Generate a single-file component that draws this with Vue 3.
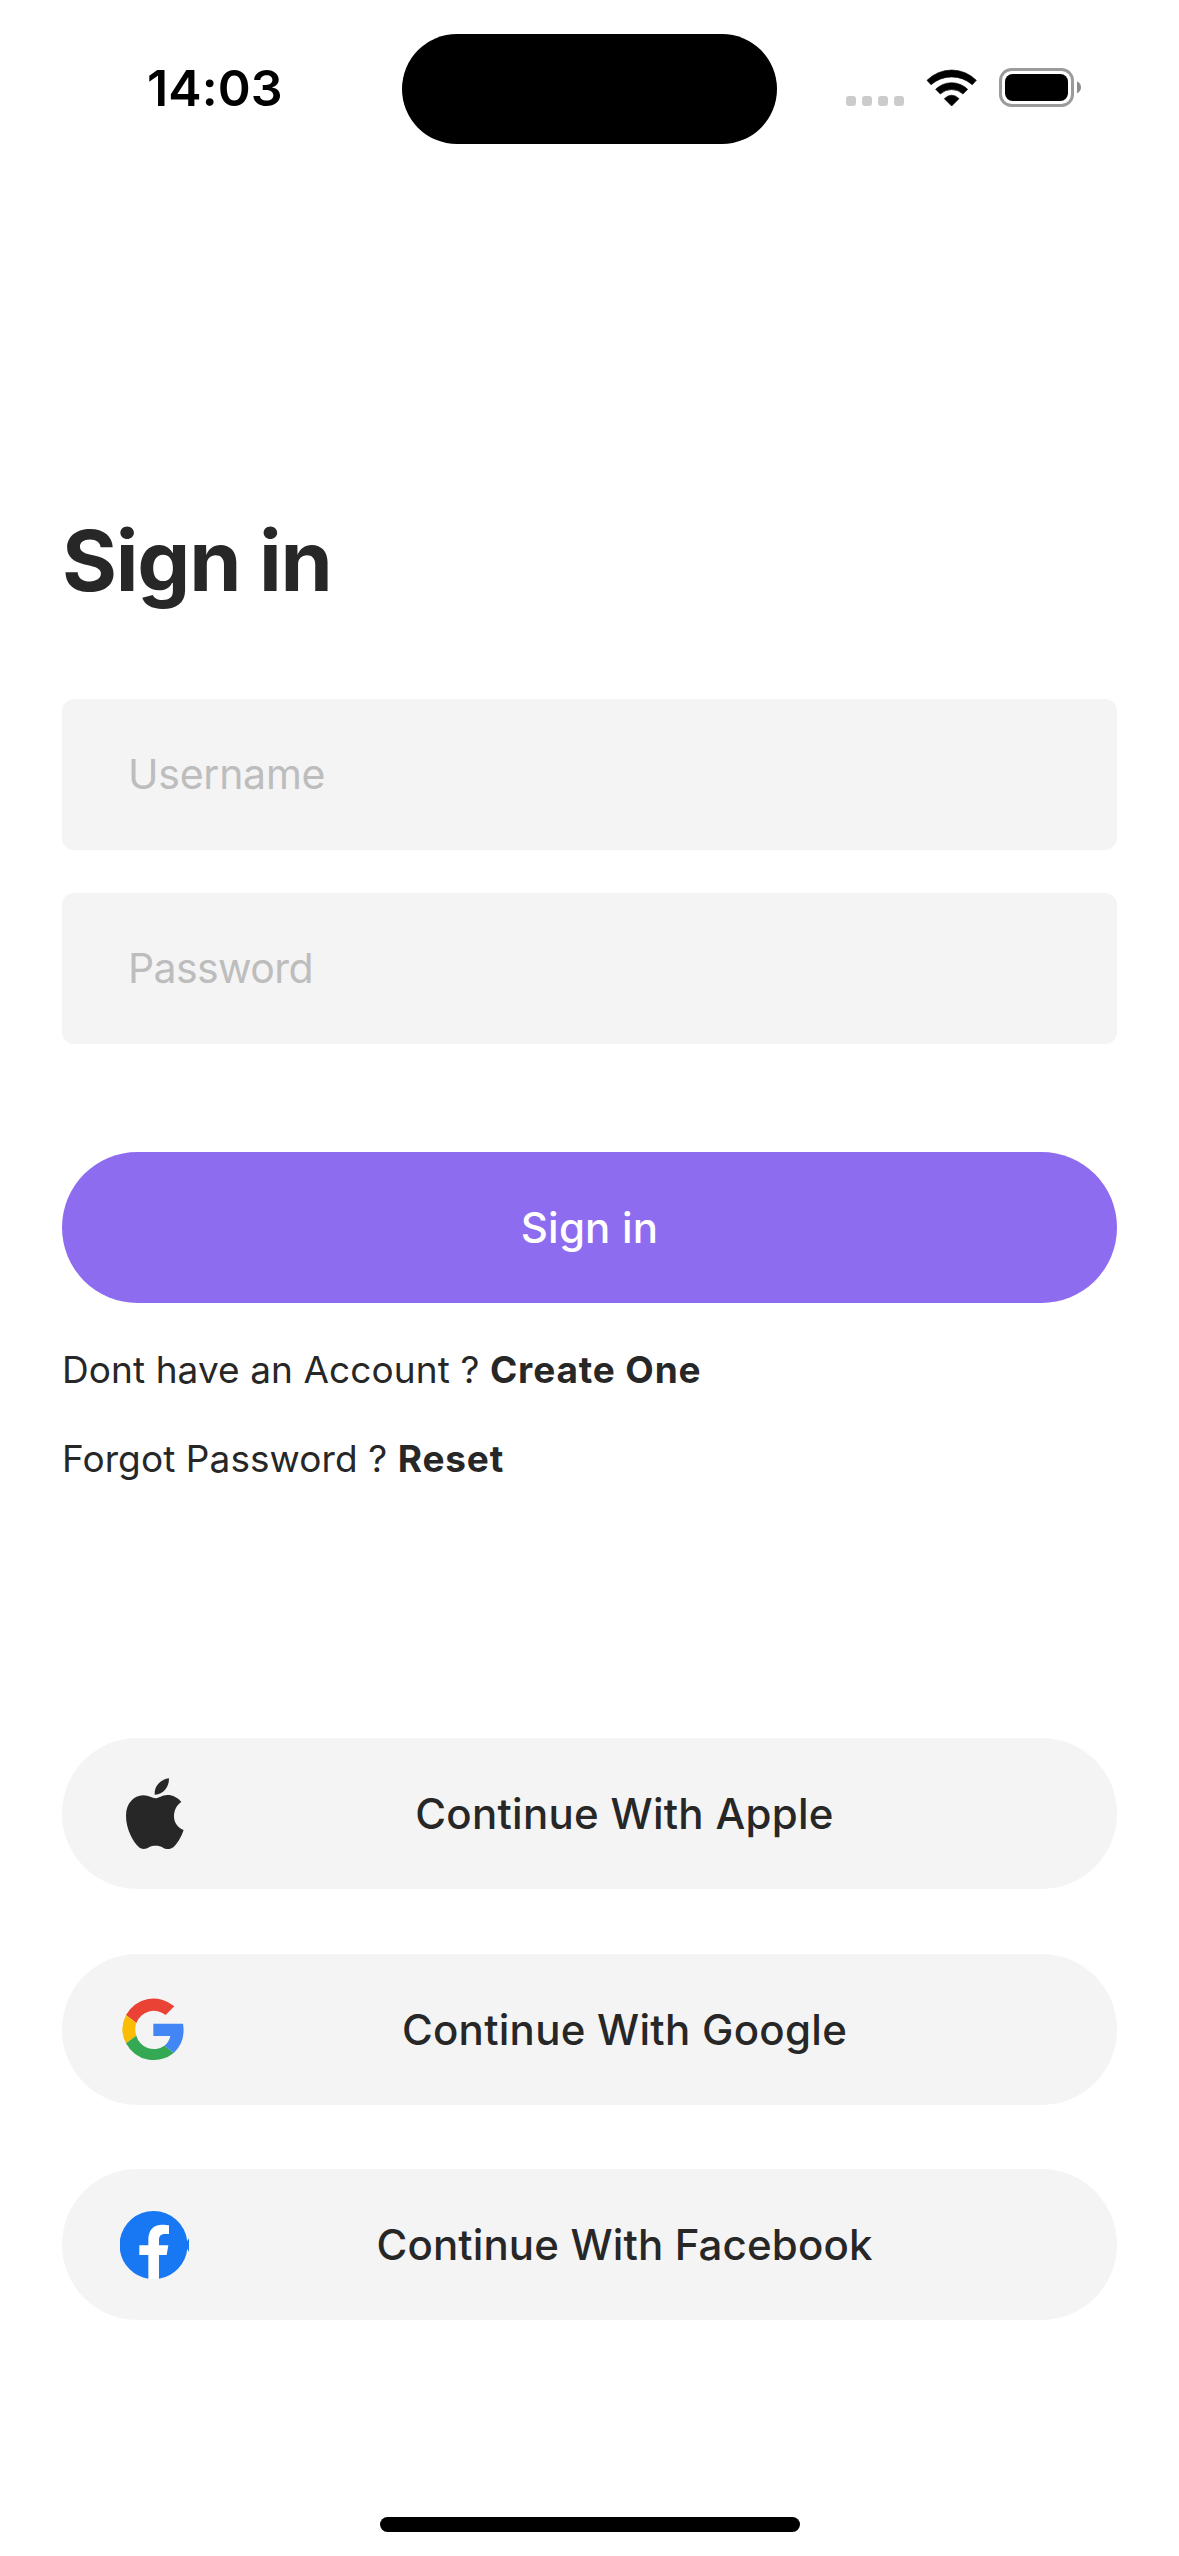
<script setup>
const fields = [
  { label: 'Username', cls: 'username' },
  { label: 'Password', cls: 'password' },
]
const providers = [
  { id: 'apple', name: 'Apple' },
  { id: 'google', name: 'Google' },
  { id: 'facebook', name: 'Facebook' },
]
</script>

<template>
  <main class="screen">
    <header class="status">
      <div class="time">14:03</div>
      <div class="island"></div>
      <div class="indicators">
        <svg class="signal" viewBox="0 0 174 30">
          <rect x="0" width="30" height="30" rx="9" />
          <rect x="48" width="30" height="30" rx="9" />
          <rect x="96" width="30" height="30" rx="9" />
          <rect x="144" width="30" height="30" rx="9" />
        </svg>
        <svg class="wifi" viewBox="288 56 154 113">
          <path d="M291 90A104 104 0 0 1 439 90L427 103A94 94 0 0 0 303 103Z" />
          <path d="M317 117A68 68 0 0 1 413 117L399 131A50 50 0 0 0 331 131Z" />
          <path d="M343 145Q365 124 387 145L365 167Z" />
        </svg>
        <svg class="battery" viewBox="507 54 246 117">
          <rect class="shell" x="511.5" y="58.5" width="216" height="108" rx="33" />
          <rect x="525" y="72" width="189" height="81" rx="23" />
          <path class="cap" d="M741 94Q753 100 753 112T741 130Z" />
        </svg>
      </div>
    </header>

    <form class="form" @submit.prevent>
      <h1 class="title">Sign in</h1>
      <div v-for="f in fields" :key="f.label" class="field">
        <span :class="f.cls">{{ f.label }}</span>
      </div>
      <button class="submit" type="submit">Sign in</button>
      <p class="hint">Dont have an Account ? <b>Create One</b></p>
      <p class="hint">Forgot Password ? <b>Reset</b></p>
    </form>

    <section class="providers">
      <button v-for="p in providers" :key="p.id" class="provider" type="button">
        <span class="icon">
          <svg v-if="p.id === 'apple'" class="apple" viewBox="228 145 174 214">
            <path d="M394 217C384 204 369 196 352 196C337 196 325 206 316 206C308 206 296 197 280 197C251 197 228 222 228 258C228 300 250 337 267 353C275 360 288 359 297 353C309 347 327 347 339 354C350 360 361 360 370 353C382 342 394 322 401 301C383 294 372 279 372 260C372 241 380 227 394 217Z" />
            <path d="M357 146C333 149 312 168 314 195C338 196 358 173 357 146Z" />
          </svg>
          <svg v-else-if="p.id === 'google'" class="google" viewBox="216 162 186 189">
            <path fill="#ea4335" d="M228 213A94 94 0 0 1 373 187L347 213A56 56 0 0 0 259 237Z" />
            <path fill="#fbbc05" d="M228 213L259 237Q252 256 259 275L228 298Q206 256 228 213Z" />
            <path fill="#34a853" d="M228 298L259 275A54 54 0 0 0 343 305L372 326A94 94 0 0 1 228 298Z" />
            <path fill="#4285f4" d="M310 239H399Q408 292 372 326L343 305Q357 295 361 276H310Z" />
          </svg>
          <svg v-else class="facebook" viewBox="210 153 207 204">
            <path fill="#1877f2" d="M311 153A102 102 0 0 1 412 244L417 234V276L412 266A102 102 0 0 1 327 356H295A102 102 0 0 1 210 272V238A102 102 0 0 1 311 153Z" />
            <path fill="#fff" d="M295 357V285H268V256H295V240C295 208 312 194 336 194C346 194 357 196 357 196V222H345C332 222 327 229 327 240V256H355L350 285H327V357Z" />
          </svg>
        </span>
        <span class="label" :class="p.id + '-label'">Continue With {{ p.name }}</span>
      </button>
    </section>

    <div class="home"></div>
  </main>
</template>

<style>
body {
  margin: 0;
  background: #fff;
}
</style>

<style scoped>
.screen {
  box-sizing: border-box;
  width: 1179px;
  height: 2556px;
  overflow: hidden;
  display: flex;
  flex-direction: column;
  background: #fff;
  color: #272727;
  font-family: Inter, "Liberation Sans", sans-serif;
}
.status {
  display: grid;
  grid-template-columns: 402px 375px 402px;
  height: 110px;
  margin-top: 34px;
  color: #000;
}
.time {
  padding-left: 147px;
  font-size: 50px;
  font-weight: 600;
  line-height: 108px;
  letter-spacing: 0.1px;
}
.island {
  border-radius: 55px;
  background: #000;
}
.indicators {
  display: flex;
  padding-left: 69px;
}
.indicators svg {
  display: block;
  flex: none;
}
.signal {
  width: 58px;
  height: 10px;
  margin-top: 62px;
  fill: #ccc;
}
.wifi {
  width: 51.3px;
  height: 37.7px;
  margin: 34.7px 0 0 22px;
  stroke: #000;
  stroke-width: 2;
  stroke-linejoin: round;
}
.battery {
  width: 82px;
  height: 39px;
  margin: 34px 0 0 21.7px;
}
.shell {
  fill: none;
  stroke: #9b9b9b;
  stroke-width: 9;
}
.cap {
  fill: #8c8c8c;
}
.form {
  display: flex;
  flex-direction: column;
  margin: 367px 62px 0;
}
.title {
  margin: 0 0 88px;
  font-size: 84px;
  font-weight: 700;
  line-height: 100px;
  letter-spacing: -1.2px;
}
.field {
  box-sizing: border-box;
  display: flex;
  align-items: center;
  height: 151px;
  margin-bottom: 43px;
  padding: 0 0 2px 66px;
  border-radius: 12px;
  background: #f4f4f4;
  color: #bdbdbe;
  font-size: 41px;
}
.username {
  letter-spacing: -0.25px;
}
.password {
  letter-spacing: -0.6px;
}
.submit {
  height: 151px;
  margin: 65px 0 44px;
  padding: 0;
  border: 0;
  border-radius: 76px;
  background: #8e6cef;
  color: #fff;
  font: 500 42px Inter, "Liberation Sans", sans-serif;
  letter-spacing: 0.2px;
}
.hint {
  margin: 0 0 44px;
  font-size: 37px;
  line-height: 45px;
  letter-spacing: 0.08px;
}
.hint b {
  font-weight: 700;
  letter-spacing: 0.86px;
}
.providers {
  display: flex;
  flex-direction: column;
  gap: 64.5px;
  margin: 213px 62px 0;
}
.provider {
  display: flex;
  align-items: center;
  height: 151px;
  padding: 0 63px 0 57px;
  border: 0;
  border-radius: 76px;
  background: #f4f4f4;
  color: #272727;
  font: 500 42px Inter, "Liberation Sans", sans-serif;
}
.icon {
  width: 76px;
}
.icon svg {
  display: block;
}
.apple {
  width: 58px;
  height: 71.3px;
  margin-left: 7px;
  fill: #272727;
}
.google {
  width: 62px;
  height: 63px;
  margin: 1px 0 0 3px;
}
.facebook {
  width: 69px;
  height: 68px;
  margin-left: 1px;
}
.label {
  flex: 1;
  text-align: center;
}
.apple-label,
.google-label {
  letter-spacing: 0.28px;
}
.facebook-label {
  letter-spacing: 0.14px;
}
.home {
  width: 420px;
  height: 15px;
  margin: 197px auto 0;
  border-radius: 8px;
  background: #000;
}
</style>
